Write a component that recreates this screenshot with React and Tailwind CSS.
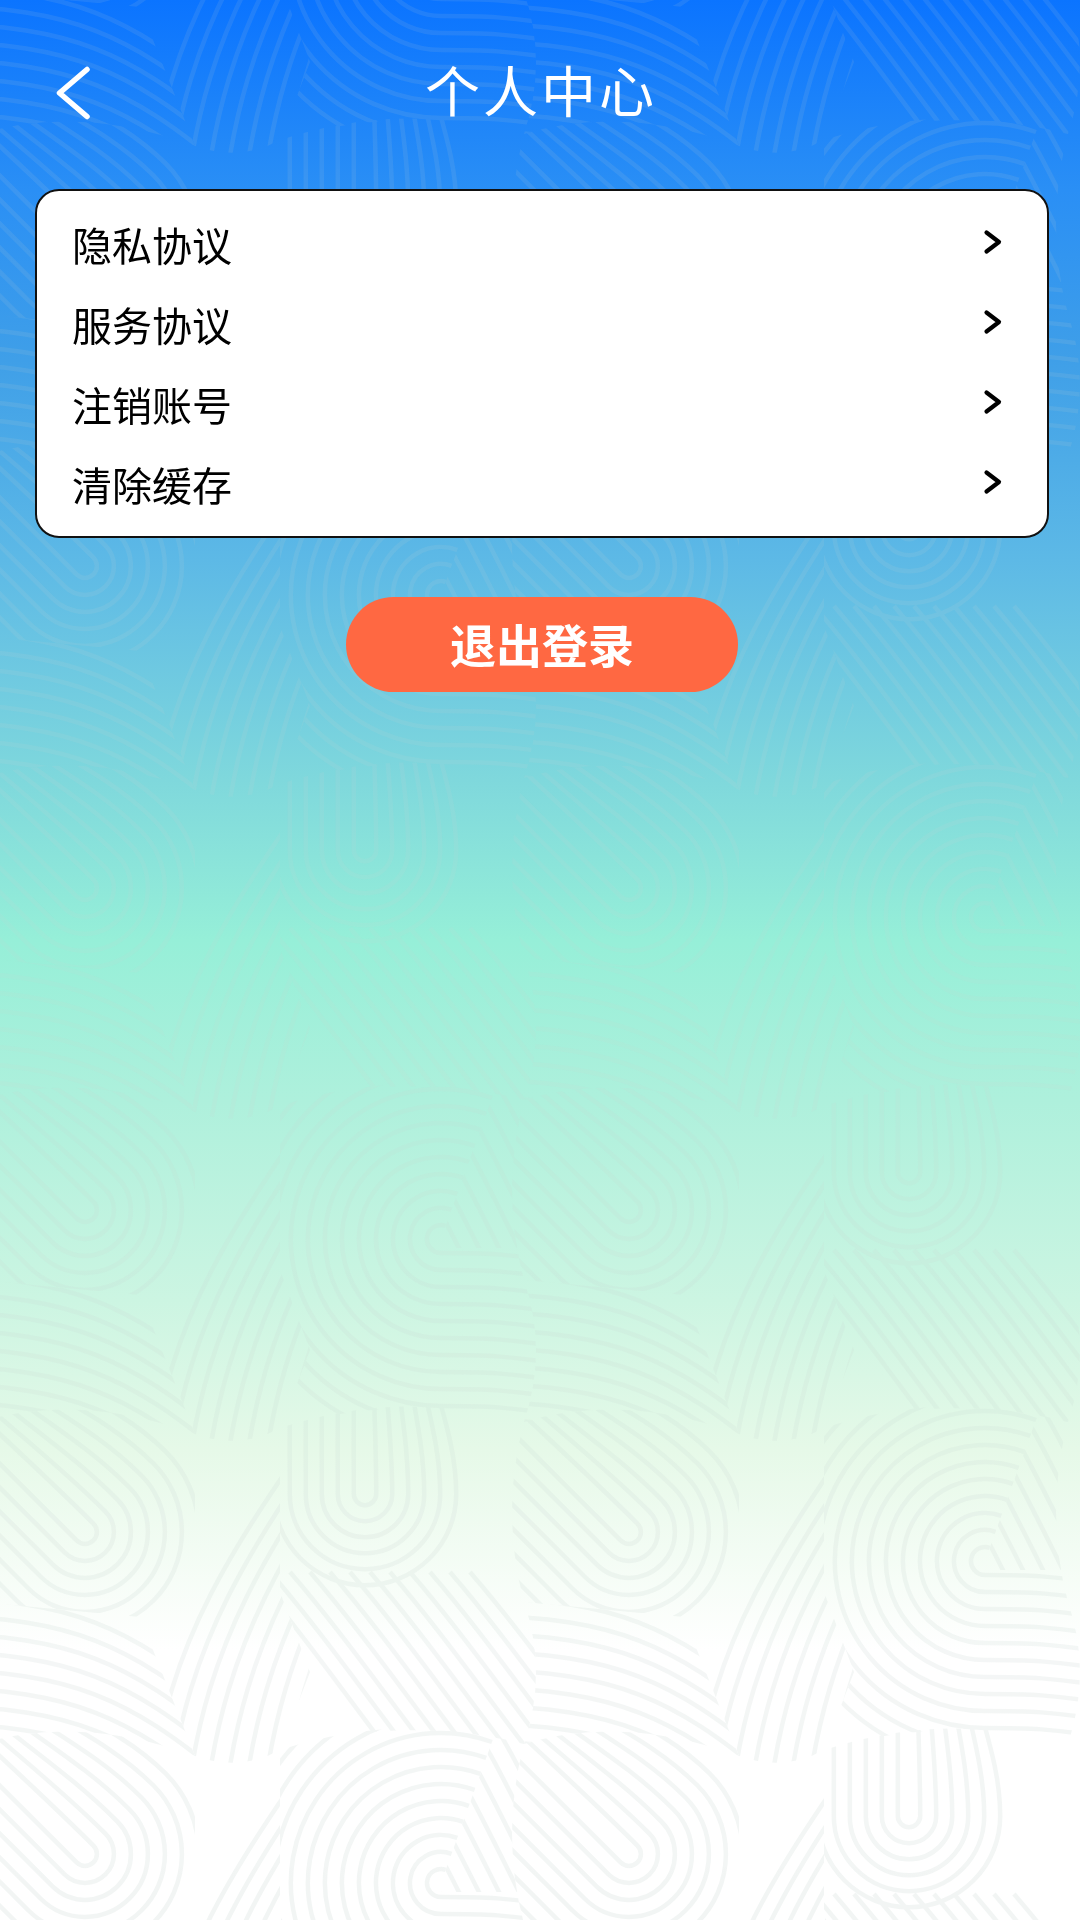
import React from 'react';

const rows = ['隐私协议', '服务协议', '注销账号', '清除缓存'];

const Chevron = () => (
    <svg width="22" height="28" viewBox="0 0 22 28" fill="none" stroke="#000" strokeWidth="4.2" strokeLinecap="round" strokeLinejoin="round" className="mb-[6px]">
        <path d="M5.5 4.5 L18 14 L5.5 23.5" />
    </svg>
);

const range = (n) => Array.from({ length: n }, (_, i) => i);

// nested U shapes, opening rotated by deg
const nestedU = (cx, cy, deg, n, gap, len) => (
    <g transform={`translate(${cx} ${cy}) rotate(${deg})`}>
        {range(n).map((i) => {
            const r = gap * (i + 0.7);
            return <path key={i} d={`M${-r} ${-len} C${-r} ${-len * 0.4} ${-r} ${-r * 0.2} ${-r} 0 A${r} ${r} 0 0 0 ${r} 0 C${r} ${-len * 0.4} ${r * 0.8} ${-len * 0.7} ${r * 0.6} ${-len - 40}`} />;
        })}
    </g>
);

const bandLines = range(10).map((i) => {
    const o = i * 18;
    return `M-40 ${176 + o} C90 ${178 + o} 150 ${205 + o} 240 ${280 + o}`;
});

const arcLines = range(12).map((i) => {
    const o = i * 19;
    return `M${170 + o} 370 C${190 + o} 220 ${245 + o} 130 ${370 + o * 0.7} ${-40 + o * 0.25}`;
});

const diagLines = range(16).map((i) => `M${320 + i * 22} -80 C${380 + i * 22} 0 ${420 + i * 20} 70 ${470 + i * 20} 170`);

const swirlLines = range(12).map((i) => {
    const r = 14 + i * 17;
    return `M${461 + r * 0.34} ${139 - r * 0.94} A${r} ${r} 0 1 0 461 ${139 + r} C500 ${139 + r} 530 ${139 + r} 590 ${150 + r}`;
});

const fanLines = range(12).map((i) => {
    const o = i * 20;
    return `M${270 + o} 150 C${330 + o} 220 ${370 + o} 280 ${440 + o} 370`;
});

const Cell = ({ swirl, x, y }) => (
    <g transform={`translate(${x} ${y})`}>
        <g clipPath="url(#reg-drop)">{nestedU(105, 110, -45, 7, 17, 150)}</g>
        <g clipPath="url(#reg-band)">{bandLines.map((d, i) => <path key={i} d={d} />)}</g>
        <g clipPath="url(#reg-arc)">{arcLines.map((d, i) => <path key={i} d={d} />)}</g>
        {swirl ? (
            <g clipPath="url(#reg-right)">
                <g clipPath="url(#reg-wedge)">{diagLines.map((d, i) => <path key={i} d={d} />)}</g>
                {swirlLines.map((d, i) => <path key={i} d={d} />)}
            </g>
        ) : (
            <g clipPath="url(#reg-right)">
                {nestedU(385, 72, 0, 6, 16, 130)}
                {fanLines.map((d, i) => <path key={i} d={d} />)}
            </g>
        )}
    </g>
);

const cells = [];
range(7).forEach((r) => {
    range(3).forEach((c) => {
        cells.push({ x: -20 + (c - 1) * 544, y: 1100 - 322 * 4 + r * 322, swirl: (r + c) % 2 === 1 });
    });
});

const Texture = () => (
    <svg className="absolute inset-0 blur-[0.7px]" width="1080" height="1920" fill="none">
        <defs>
            <clipPath id="reg-drop"><path d="M0 0 Q100 -30 215 12 V120 Q205 180 160 195 L0 180 Q-24 90 0 0 Z" /></clipPath>
            <clipPath id="reg-band"><path d="M0 180 L160 195 L215 334 Q100 292 0 322 Q24 250 0 180 Z" /></clipPath>
            <clipPath id="reg-arc"><path d="M215 12 Q260 28 300 6 V170 L330 250 L300 328 Q260 350 215 334 L160 195 Q205 180 215 120 Z" /></clipPath>
            <clipPath id="reg-right"><path d="M300 6 Q420 -34 544 0 Q520 90 544 180 Q568 250 544 322 Q420 292 300 328 L330 250 L300 170 Z" /></clipPath>
            <clipPath id="reg-wedge"><path d="M461 139 L563 -143 H620 V148 H461 Z" /></clipPath>
            <linearGradient id="fade" x1="0" y1="0" x2="0" y2="1">
                <stop offset="0" stopColor="#fff" stopOpacity="0.11" />
                <stop offset="0.5" stopColor="#fff" stopOpacity="0.12" />
                <stop offset="1" stopColor="#fff" stopOpacity="0.24" />
            </linearGradient>
            <mask id="fade-mask" maskUnits="userSpaceOnUse" x="0" y="0" width="1080" height="1920"><rect width="1080" height="1920" fill="url(#fade)" /></mask>
        </defs>
        <g stroke="#c9d6d2" strokeWidth="4.5" mask="url(#fade-mask)">
            {cells.map((cell, i) => <Cell key={i} {...cell} />)}
        </g>
    </svg>
);

const App = () => {
    return (
        <div className="relative w-[1080px] h-[1920px] overflow-hidden bg-[linear-gradient(180deg,#0b74ff_0px,#2a8ff5_190px,#3f9fe8_360px,#5db9e6_560px,#7fd8dc_780px,#96efd8_940px,#aef0dc_1100px,#ccf5e2_1300px,#e6f9e8_1450px,#ffffff_1650px)] font-['Noto_Sans_CJK_SC','Noto_Sans',sans-serif]">
            <Texture />
            <div className="relative flex flex-col">
                <div className="grid grid-cols-[1fr_auto_1fr] items-center h-[180px] mb-[9px]">
                    <svg width="35" height="54" viewBox="0 0 35 54" fill="none" stroke="#fff" strokeWidth="5.5" strokeLinecap="round" strokeLinejoin="round" className="ml-[56px] mt-[5px]">
                        <path d="M31 3.5 L3.5 27 L31 50.5" />
                    </svg>
                    <h1 className="text-[55px] leading-none font-normal tracking-[3px] text-white mb-[4px] mr-[-2px]">个人中心</h1>
                    <div />
                </div>
                <div className="w-[1014px] h-[349px] ml-[35px] pt-[14px] pl-[35px] pr-[44px] bg-white border-2 border-[#111] rounded-[24px]">
                    {rows.map((row) => (
                        <div key={row} className="flex items-center justify-between h-[80px]">
                            <span className="text-[40px] leading-none text-black mb-[3px]">{row}</span>
                            <Chevron />
                        </div>
                    ))}
                </div>
                <button className="flex items-center justify-center w-[392px] h-[95px] ml-[346px] mt-[59px] rounded-full bg-[#ff6842] text-[46px] font-bold leading-none text-white pb-[4px]">
                    退出登录
                </button>
            </div>
        </div>
    );
};

export default App;
